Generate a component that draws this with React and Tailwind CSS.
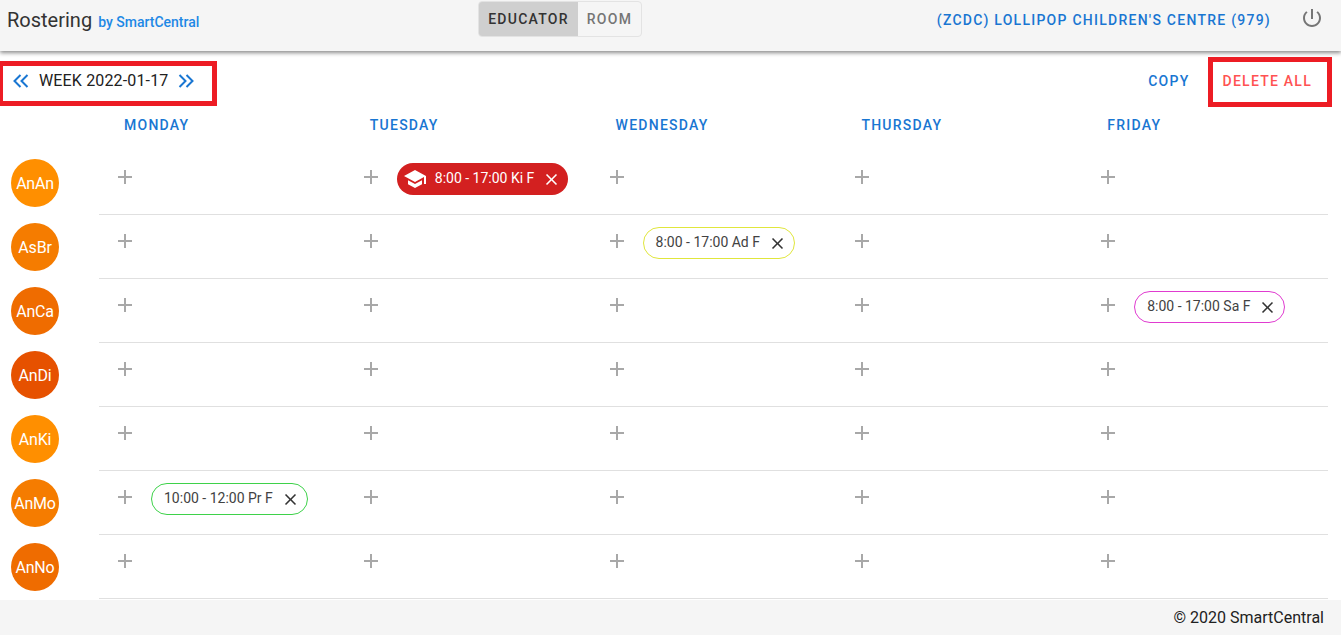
import React from "react";

const days = ["MONDAY", "TUESDAY", "WEDNESDAY", "THURSDAY", "FRIDAY"];

const rows = [
  { initials: "AnAn", color: "bg-[#ff8f00]", chips: { 1: { label: "8:00 - 17:00 Ki F", filled: true } } },
  { initials: "AsBr", color: "bg-[#f57c00]", chips: { 2: { label: "8:00 - 17:00 Ad F", border: "border-[#e0e63c]" } } },
  { initials: "AnCa", color: "bg-[#ef6c00]", chips: { 4: { label: "8:00 - 17:00 Sa F", border: "border-[#e03bd0]" } } },
  { initials: "AnDi", color: "bg-[#e65100]", chips: {} },
  { initials: "AnKi", color: "bg-[#ff8f00]", chips: {} },
  { initials: "AnMo", color: "bg-[#f57c00]", chips: { 0: { label: "10:00 - 12:00 Pr F", border: "border-[#3ed24a]" } } },
  { initials: "AnNo", color: "bg-[#ef6c00]", chips: {} },
];

const PlusIcon = () => (
  <svg width="24" height="24" viewBox="0 0 24 24" className="fill-[#a8a8a8]">
    <path d="M19 13h-6v6h-2v-6H5v-2h6V5h2v6h6v2z" />
  </svg>
);

const CloseIcon = ({ className }) => (
  <svg width="19" height="19" viewBox="0 0 24 24" className={`shrink-0 ${className}`}>
    <path d="M19 6.41L17.59 5 12 10.59 6.41 5 5 6.41 10.59 12 5 17.59 6.41 19 12 13.41 17.59 19 19 17.59 13.41 12z" />
  </svg>
);

const CapIcon = () => (
  <svg width="24" height="24" viewBox="0 0 24 24" className="shrink-0 fill-white">
    <path d="M5 13.18v4L12 21l7-3.82v-4L12 17l-7-3.82zM12 3L1 9l11 6 9-4.91V17h2V9L12 3z" />
  </svg>
);

const Chevrons = ({ flip }) => (
  <svg width="20" height="20" viewBox="0 0 20 20" fill="none" stroke="#1976d2" strokeWidth="2" className={flip ? "rotate-180" : ""}>
    <path d="M9.5 4l-6 6 6 6M16.5 4l-6 6 6 6" />
  </svg>
);

const Chip = ({ label, filled, border }) =>
  filled ? (
    <div className="mt-3 flex h-8 items-center rounded-full bg-[#d32020] pl-[6px] pr-[7px] text-sm text-white">
      <CapIcon />
      <span className="mb-[2px] ml-[8px] mr-[8px] whitespace-nowrap">{label}</span>
      <CloseIcon className="fill-white" />
    </div>
  ) : (
    <div className={`mt-3 flex h-8 items-center rounded-full border ${border} pl-3 pr-[7px] text-sm text-[#424242]`}>
      <span className="mb-[2px] mr-[8px] whitespace-nowrap">{label}</span>
      <CloseIcon className="fill-[#333333]" />
    </div>
  );

export default function App() {
  return (
    <div className="relative flex h-[635px] flex-col overflow-hidden bg-white font-['Roboto',sans-serif] text-[#212121]">
      <header className="z-10 flex h-[51px] shrink-0 items-start bg-[#f5f5f5] shadow-[0_2px_4px_rgba(0,0,0,0.45)]">
        <div className="flex w-[478px] items-baseline pl-[7px] pt-[8px]">
          <span className="text-[20px] leading-6 text-[#333333]">Rostering</span>
          <span className="ml-[6px] text-sm font-medium text-[#1e88e5]">by SmartCentral</span>
        </div>
        <div className="mt-px flex h-9 overflow-hidden rounded border border-[#e3e3e3] text-sm tracking-[1.25px]">
          <div className="flex w-[99px] items-center justify-center bg-[#cfcfcf] font-medium text-[#333333]">EDUCATOR</div>
          <div className="flex w-[63px] items-center justify-center font-medium text-[#757575]">ROOM</div>
        </div>
        <div className="ml-auto flex items-center pt-[6px]">
          <span className="mt-[4px] text-sm font-medium tracking-[1.25px] text-[#1976d2]">(ZCDC) LOLLIPOP CHILDREN'S CENTRE (979)</span>
          <svg width="24" height="24" viewBox="0 0 24 24" className="ml-[29px] mr-[17px] fill-[#757575]">
            <path d="M13 3h-2v10h2V3zm4.83 2.17l-1.42 1.42C17.99 7.86 19 9.81 19 12c0 3.87-3.13 7-7 7s-7-3.13-7-7c0-2.19 1.01-4.14 2.58-5.42L6.17 5.17C4.23 6.82 3 9.26 3 12c0 4.97 4.03 9 9 9s9-4.03 9-9c0-2.74-1.23-5.18-3.17-6.83z" />
          </svg>
        </div>
      </header>

      <main className="flex min-h-0 flex-1 flex-col">
        <div className="flex h-[60px] shrink-0 items-center justify-between">
          <div className="flex items-center pl-[11px]">
            <Chevrons />
            <span className="ml-2 text-base tracking-[0.15px]">WEEK 2022-01-17</span>
            <span className="ml-2"><Chevrons flip /></span>
          </div>
          <div className="flex items-center pr-[29px] text-sm font-medium tracking-[1.25px]">
            <span className="text-[#1976d2]">COPY</span>
            <span className="ml-[33px] text-[#ff5252]">DELETE ALL</span>
          </div>
        </div>

        <div className="ml-[99px] mr-[13px] grid h-[40px] shrink-0 grid-cols-5 items-center pb-3">
          {days.map((day) => (
            <div key={day} className="pl-[25px] text-sm font-medium tracking-[1.25px] text-[#1976d2]">
              {day}
            </div>
          ))}
        </div>

        {rows.map((row) => (
          <div key={row.initials} className="flex h-[64px] shrink-0">
            <div className="w-[99px] shrink-0 pl-[11px] pt-2">
              <div className={`flex h-12 w-12 items-center justify-center rounded-full pt-px text-base tracking-[-0.2px] text-white ${row.color}`}>
                {row.initials}
              </div>
            </div>
            <div className="mr-[13px] grid flex-1 grid-cols-5 border-b border-[#e0e0e0]">
              {days.map((day, i) => (
                <div key={day} className="flex items-start">
                  <button className="flex h-[52px] w-[52px] shrink-0 items-center justify-center">
                    <PlusIcon />
                  </button>
                  {row.chips[i] && <Chip {...row.chips[i]} />}
                </div>
              ))}
            </div>
          </div>
        ))}
      </main>

      <footer className="flex h-[35px] shrink-0 items-center justify-end bg-[#f5f5f5] pr-[17px] text-base text-[#212121]">
        © 2020 SmartCentral
      </footer>

      {/* red annotation boxes drawn over the page */}
      <div className="pointer-events-none absolute left-[-2px] top-[61px] z-20 h-[45px] w-[219px] border-[5px] border-[#ed1c24]" />
      <div className="pointer-events-none absolute left-[1208px] top-[57px] z-20 h-[50px] w-[124px] border-[5px] border-[#ed1c24]" />
    </div>
  );
}
